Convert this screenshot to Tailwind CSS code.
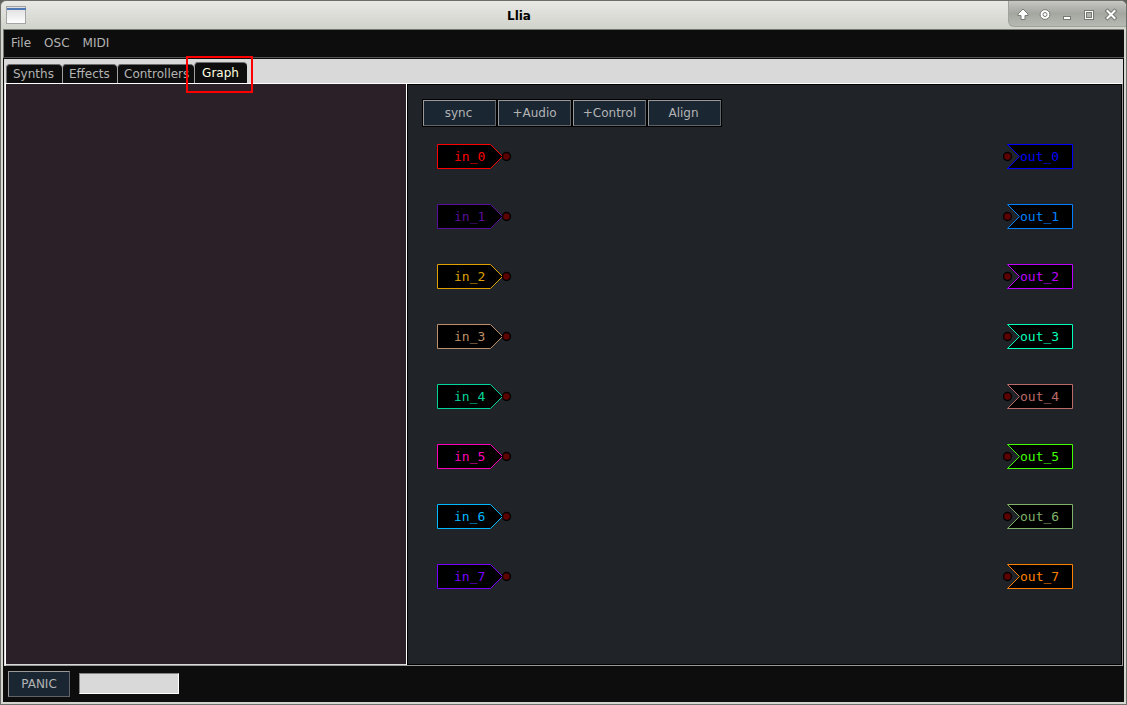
<!DOCTYPE html>
<html lang="en">
<head>
<meta charset="utf-8">
<title>Llia</title>
<script src="https://cdn.jsdelivr.net/npm/@tailwindcss/browser@4"></script>
</head>
<body class="min-h-screen flex flex-col bg-[#5f5f5b] font-['DejaVu_Sans',sans-serif] text-xs text-[#b3b3b3]">
<svg class="hidden" aria-hidden="true">
  <symbol id="in" viewBox="0 0 75 26">
    <path d="M.5.5H53.5L65.5 12.5L53.5 24.5H.5Z" fill="#000" stroke="currentColor"/>
    <circle cx="69.5" cy="12.5" r="4" fill="#5c0000" stroke="#000" stroke-width="1.4"/>
  </symbol>
  <symbol id="out" viewBox="0 0 71 26">
    <path d="M4.5.5H69.5V24.5H4.5L16.5 12.5Z" fill="#000" stroke="currentColor"/>
    <circle cx="4.5" cy="12.5" r="4" fill="#5c0000" stroke="#000" stroke-width="1.4"/>
  </symbol>
</svg>
<div class="flex-1 flex flex-col rounded-t-md border border-[#6e6e6a] bg-[#d6d6d0]">
  <header class="h-7 flex rounded-t-md bg-linear-to-b from-[#e8e8e5] to-[#d0d3ca]">
    <svg class="w-7 h-7 shrink-0" viewBox="0 0 28 28" aria-hidden="true">
      <defs><linearGradient id="wi" x2="0" y2="1"><stop stop-color="#dcdcdc"/><stop offset="1" stop-color="#fff"/></linearGradient></defs>
      <rect x="5.5" y="5.5" width="19" height="17" fill="url(#wi)" stroke="#a3a3a3"/>
      <path d="M6 8H25" stroke="#4f78b5" stroke-width="2"/>
    </svg>
    <h1 class="flex-1 pt-px pl-px text-center leading-7 font-bold text-black">Llia</h1>
    <div class="h-[26px] flex items-center gap-1 pl-[5px] pr-[6px] rounded-bl-md rounded-tr-md border-l border-b border-[#a0a29c] bg-linear-to-b from-[#c6c6c3] via-[#a4a6a0] to-[#b6b8b2]">
      <button aria-label="Shade" class="size-[18px]"><svg viewBox="0 0 18 18"><path d="M9 4L14 9V10.5H11V14.5H7V10.5H4V9Z" fill="#fff" stroke="#777973"/></svg></button>
      <button aria-label="Stick" class="size-[18px]"><svg viewBox="0 0 18 18"><circle cx="9" cy="9.5" r="4.9" fill="#fff" stroke="#777973"/><circle cx="9" cy="9.5" r="2" fill="#fff" stroke="#777973"/></svg></button>
      <button aria-label="Minimize" class="size-[18px]"><svg viewBox="0 0 18 18"><rect x="5.5" y="11.5" width="7" height="3" fill="#fff" stroke="#777973"/></svg></button>
      <button aria-label="Maximize" class="size-[18px]"><svg viewBox="0 0 18 18"><rect x="4.5" y="5.5" width="9" height="9" fill="#fff" stroke="#777973"/><rect x="6.5" y="7.5" width="5" height="5" fill="#b0b2ac" stroke="#777973"/></svg></button>
      <button aria-label="Close" class="size-[18px]"><svg viewBox="0 0 18 18"><path d="M5.5 6L12.5 13M12.5 6L5.5 13" stroke="#777973" stroke-width="4" stroke-linecap="square"/><path d="M5.5 6L12.5 13M12.5 6L5.5 13" stroke="#fff" stroke-width="2" stroke-linecap="square"/></svg></button>
    </div>
  </header>
  <div class="relative flex-1 flex flex-col mx-[2px] mb-[2px] bg-[#0d0d0d]">
    <nav class="h-[29px] flex items-center gap-[13px] pb-[2px] border-y border-t-[#777773] border-l border-l-[#777773] border-b-[#555] pl-[7px]">
      <button>File</button><button>OSC</button><button>MIDI</button>
    </nav>
    <main class="flex-1 flex flex-col mt-px mx-px bg-[#d9d9d9]">
      <div role="tablist" class="h-6 flex items-end pl-[2px]">
        <button role="tab" class="h-[19px] w-14 rounded-t-sm border-t border-l border-[#6d6d6d] bg-[#0d0d0d] pl-[6px] text-left">Synths</button>
        <button role="tab" class="h-[19px] w-[55px] rounded-t-sm border-t border-l border-[#6d6d6d] border-l-[#a0a0a0] bg-[#0d0d0d] pl-[6px] text-left">Effects</button>
        <button role="tab" class="h-[19px] w-[77px] rounded-t-sm border-t border-l border-[#6d6d6d] border-l-[#a0a0a0] bg-[#0d0d0d] pl-[6px] text-left">Controllers</button>
        <button role="tab" aria-selected="true" class="h-[21px] w-[53px] rounded-t-sm border-t border-l border-[#6d6d6d] border-l-[#a0a0a0] bg-[#0d0d0d] text-[#ffffe0] pr-px">Graph</button>
      </div>
      <div class="flex-1 flex ml-px border border-white border-b-[#999] border-r-[#999]">
        <aside class="w-[400px] shrink-0 bg-[#2b2028] border-b border-[#d9d9d9]"></aside>
        <section class="flex-1 flex flex-col border-l border-white bg-[#202428]">
          <div class="flex-1 border border-black px-[14px] pt-[14px]">
            <div class="flex">
              <button class="w-[75px] h-7 border border-black bg-[#1a2733]"><span class="flex h-full items-center justify-center border border-[#999] border-b-[#606468] border-r-[#606468] pr-[2px]">sync</span></button>
              <button class="w-[75px] h-7 border border-black bg-[#1a2733]"><span class="flex h-full items-center justify-center border border-[#999] border-b-[#606468] border-r-[#606468]">+Audio</span></button>
              <button class="w-[75px] h-7 border border-black bg-[#1a2733]"><span class="flex h-full items-center justify-center border border-[#999] border-b-[#606468] border-r-[#606468]">+Control</span></button>
              <button class="w-[75px] h-7 border border-black bg-[#1a2733]"><span class="flex h-full items-center justify-center border border-[#999] border-b-[#606468] border-r-[#606468] pr-[2px]">Align</span></button>
            </div>
            <div class="flex justify-between pt-[17px] pl-[15px] pr-[33px] font-['DejaVu_Sans_Mono',monospace] text-[13px]">
              <ul class="flex flex-col gap-[34px]">
                <li><svg class="block w-[75px] h-[26px] text-[#ff0000]"><use href="#in"/><text x="17" y="17" fill="currentColor">in_0</text></svg></li>
                <li><svg class="block w-[75px] h-[26px] text-[#5a0f9c]"><use href="#in"/><text x="17" y="17" fill="currentColor">in_1</text></svg></li>
                <li><svg class="block w-[75px] h-[26px] text-[#dfa000]"><use href="#in"/><text x="17" y="17" fill="currentColor">in_2</text></svg></li>
                <li><svg class="block w-[75px] h-[26px] text-[#bc8f68]"><use href="#in"/><text x="17" y="17" fill="currentColor">in_3</text></svg></li>
                <li><svg class="block w-[75px] h-[26px] text-[#00d69a]"><use href="#in"/><text x="17" y="17" fill="currentColor">in_4</text></svg></li>
                <li><svg class="block w-[75px] h-[26px] text-[#ff00b4]"><use href="#in"/><text x="17" y="17" fill="currentColor">in_5</text></svg></li>
                <li><svg class="block w-[75px] h-[26px] text-[#00b8ff]"><use href="#in"/><text x="17" y="17" fill="currentColor">in_6</text></svg></li>
                <li><svg class="block w-[75px] h-[26px] text-[#7a00ff]"><use href="#in"/><text x="17" y="17" fill="currentColor">in_7</text></svg></li>
              </ul>
              <ul class="flex flex-col gap-[34px]">
                <li><svg class="block w-[71px] h-[26px] text-[#0000ff]"><use href="#out"/><text x="17" y="17" fill="currentColor">out_0</text></svg></li>
                <li><svg class="block w-[71px] h-[26px] text-[#0080ff]"><use href="#out"/><text x="17" y="17" fill="currentColor">out_1</text></svg></li>
                <li><svg class="block w-[71px] h-[26px] text-[#bf00ff]"><use href="#out"/><text x="17" y="17" fill="currentColor">out_2</text></svg></li>
                <li><svg class="block w-[71px] h-[26px] text-[#00ffb8]"><use href="#out"/><text x="17" y="17" fill="currentColor">out_3</text></svg></li>
                <li><svg class="block w-[71px] h-[26px] text-[#bc6a68]"><use href="#out"/><text x="17" y="17" fill="currentColor">out_4</text></svg></li>
                <li><svg class="block w-[71px] h-[26px] text-[#40ff00]"><use href="#out"/><text x="17" y="17" fill="currentColor">out_5</text></svg></li>
                <li><svg class="block w-[71px] h-[26px] text-[#7fb069]"><use href="#out"/><text x="17" y="17" fill="currentColor">out_6</text></svg></li>
                <li><svg class="block w-[71px] h-[26px] text-[#ff8000]"><use href="#out"/><text x="17" y="17" fill="currentColor">out_7</text></svg></li>
              </ul>
            </div>
          </div>
        </section>
      </div>
    </main>
    <footer class="h-9 flex items-center gap-[9px] pl-[5px]">
      <button class="w-[62px] h-[26px] border border-[#999] border-b-[#606468] border-r-[#606468] bg-[#1a2733]">PANIC</button>
      <input aria-label="Status" readonly class="w-[100px] h-[21px] mb-px border border-[#828282] border-b-white border-r-white bg-[#d9d9d9]">
    </footer>
    <div class="absolute left-[183px] top-[27px] w-[67px] h-[37px] border-2 border-[#ff0000]"></div>
  </div>
</div>
</body>
</html>
